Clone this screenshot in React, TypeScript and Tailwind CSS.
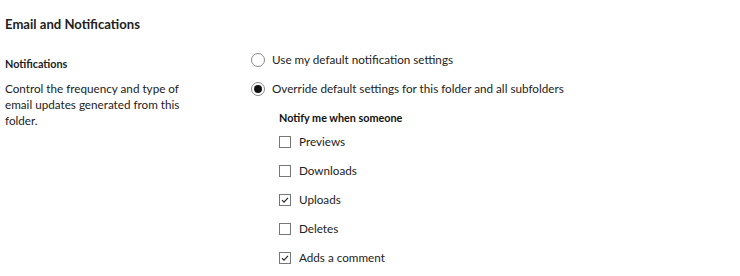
import React from "react";

function Radio({ checked, label }: { checked?: boolean; label: string }) {
  return (
    <div className="flex items-center h-[29px]">
      <span className="w-[14px] h-[14px] rounded-full border border-[#8a8a8a] bg-white flex items-center justify-center shrink-0">
        {checked && <span className="w-[8px] h-[8px] rounded-full bg-[#111]" />}
      </span>
      <span className="ml-[7px] text-[11.7px] text-[#222]">{label}</span>
    </div>
  );
}

function Check({ checked, label }: { checked?: boolean; label: string }) {
  return (
    <div className="flex items-center h-[29px]">
      <span className="w-[12px] h-[12px] border border-[#777] bg-white flex items-center justify-center shrink-0">
        {checked && (
          <svg width="10" height="10" viewBox="0 0 10 10">
            <path d="M2 5.2 L4 7.2 L8 2.8" fill="none" stroke="#222" strokeWidth="1.1" />
          </svg>
        )}
      </span>
      <span className="ml-[8px] text-[11.7px] text-[#222]">{label}</span>
    </div>
  );
}

export default function App() {
  return (
    <div className="w-[740px] h-[276px] bg-white overflow-hidden" style={{ fontFamily: "Lato, 'Open Sans', sans-serif" }}>
      <div className="pl-[5px] pt-[15px]">
        <h1 className="text-[13.1px] font-bold text-[#222] leading-[18px]">Email and Notifications</h1>
      </div>
      <div className="flex mt-[12px]">
        <div className="w-[245px] pl-[5px] pt-[12px]">
          <div className="text-[10.8px] font-bold text-[#222] leading-[14px]">Notifications</div>
          <p className="mt-[9px] text-[11.7px] text-[#222] leading-[16px] w-[190px]">
            Control the frequency and type of email updates generated from this folder.
          </p>
        </div>
        <div className="pl-[6px]">
          <Radio label="Use my default notification settings" />
          <Radio checked label="Override default settings for this folder and all subfolders" />
          <div className="pl-[28px] pt-[8px]">
            <div className="text-[10.8px] font-bold text-[#111] leading-[14px]">Notify me when someone</div>
            <div className="mt-[2px]">
              <Check label="Previews" />
              <Check label="Downloads" />
              <Check checked label="Uploads" />
              <Check label="Deletes" />
              <Check checked label="Adds a comment" />
            </div>
          </div>
        </div>
      </div>
    </div>
  );
}
